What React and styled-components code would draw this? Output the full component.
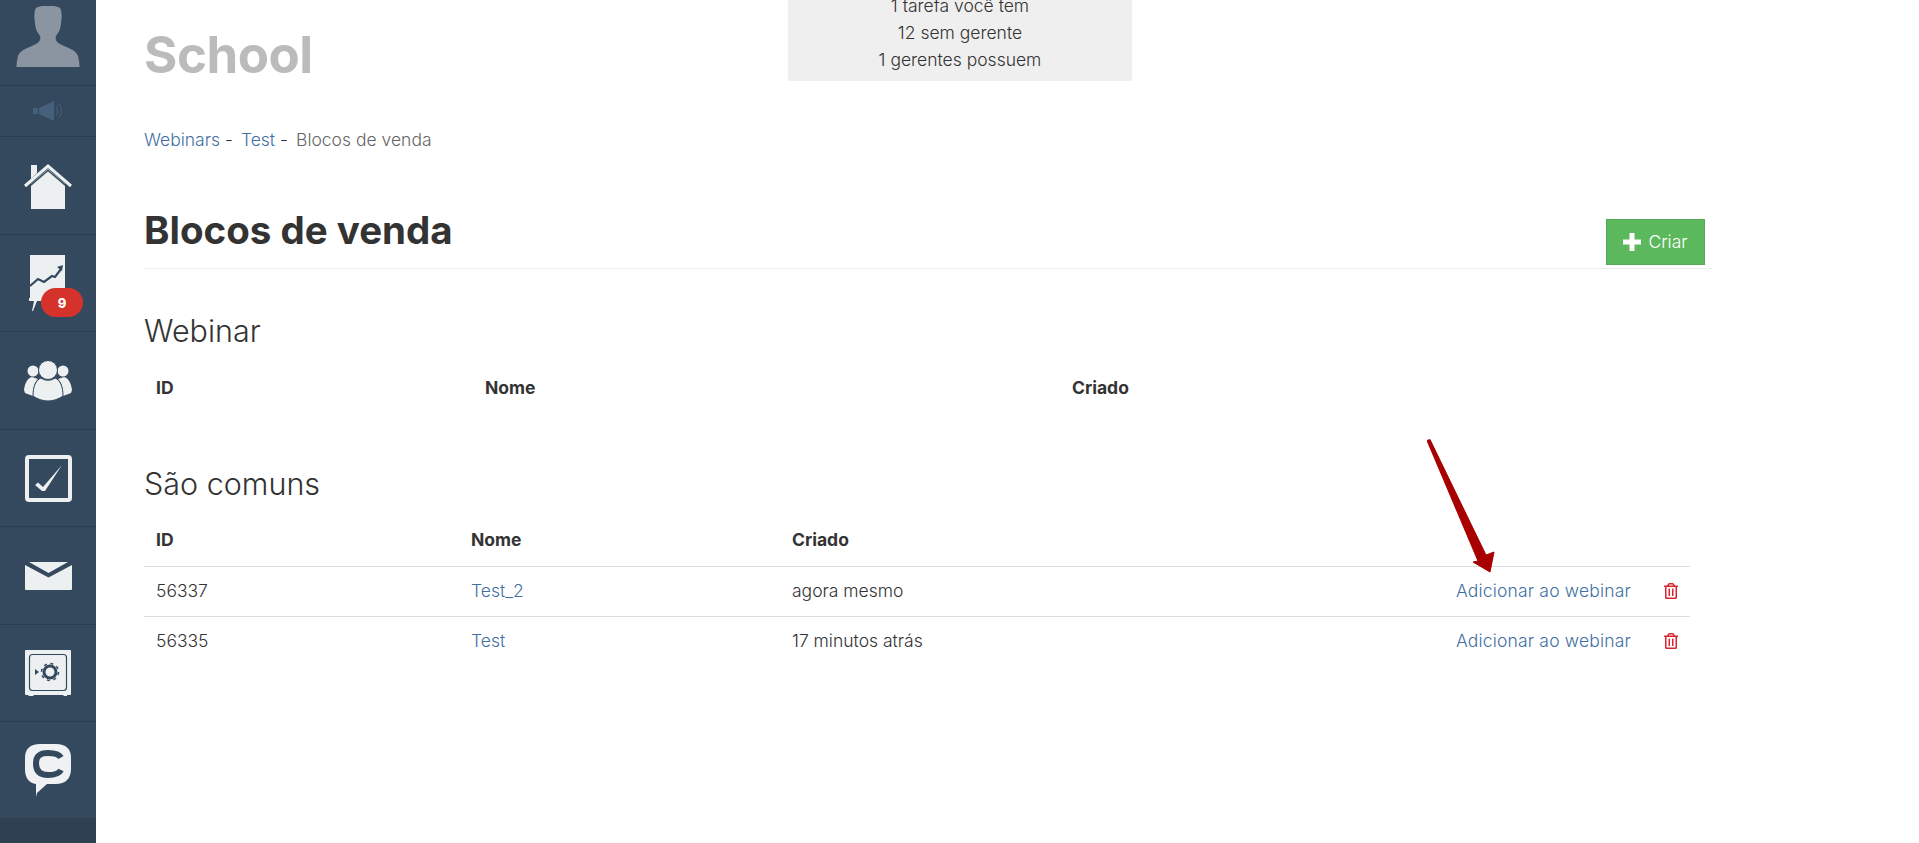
import styled, { createGlobalStyle } from "styled-components";
import { FaRegTrashAlt } from "react-icons/fa";

const GlobalStyle = createGlobalStyle`
    html, body {
        margin: 0;
        padding: 0;
        background: #fff;
        overflow: hidden;
    }
    body {
        font-family: "Inter", "Liberation Sans", sans-serif;
        color: #333;
    }
    * {
        box-sizing: border-box;
    }
`;

const latestRows = [
    { id: "56337", name: "Test_2", created: "agora mesmo" },
    { id: "56335", name: "Test", created: "17 minutos atrás" },
];

const App = () => {
    return (
        <>
            <GlobalStyle />
            <Page>
                <Sidebar>
                    <NavItem $height={86} $bottom={12}>
                        <svg width="64" height="62" viewBox="0 0 64 62">
                            <path
                                fill="#8b95a1"
                                d="M20 2C24 -1 40 -1 44 2C46 5 46 12 45 17C45 22 43 26 40 30C39 33 40 36 44 38C52 42 60 44 62 50C63 54 63.5 58 63.5 61H.5C.5 58 1 54 2 50C4 44 12 42 20 38C24 36 25 33 24 30C21 26 19 22 19 17C18 12 18 5 20 2Z"
                            />
                        </svg>
                    </NavItem>
                    <NavItem $height={51}>
                        <svg width="30" height="20" viewBox="0 0 30 20">
                            <path fill="#465f7b" d="M0 7h5v6H0zM6 7l15-7v20L6 13z" />
                            <path fill="none" stroke="#465f7b" strokeWidth="1" d="M23 5c2 3 2 7 0 10M26 3c3 4 3 10 0 14" />
                        </svg>
                    </NavItem>
                    <NavItem $height={98}>
                        <svg width="48" height="46" viewBox="0 0 48 46">
                            <path fill="#ecf0f1" d="M7 2h6v8l-6 6zM7 21L24 6l17 15v25H7z" />
                            <path fill="none" stroke="#ecf0f1" strokeWidth="3" d="M1 23L24 3l23 20" />
                            <path fill="none" stroke="#34495e" strokeWidth="1.4" d="M3 25.5L24 7.5l21 18" />
                        </svg>
                    </NavItem>
                    <NavItem $height={97}>
                        <svg width="38" height="57" viewBox="0 0 38 57">
                            <path fill="#ecf0f1" d="M1 0h35v44H1z" />
                            <path fill="none" stroke="#34495e" strokeWidth="2.2" d="M1 31l8-7 6 3 8-6 3 1 6-8" />
                            <path fill="#34495e" d="M28 12l6-2-1 6z" />
                            <path fill="#ecf0f1" d="M0 43h20v3H0zM5 46h3l-4 10H3z" />
                        </svg>
                        <Badge>9</Badge>
                    </NavItem>
                    <NavItem $height={98}>
                        <svg width="48" height="41" viewBox="0 0 48 41">
                            <circle cx="9" cy="11" r="5.5" fill="#ecf0f1" />
                            <circle cx="39" cy="11" r="5.5" fill="#ecf0f1" />
                            <path fill="#ecf0f1" d="M8 17c-4 1-7 5-8 13l1 3 8 3c0-7 1-13 5-17zM40 17c4 1 7 5 8 13l-1 3-8 3c0-7-1-13-5-17z" />
                            <circle cx="24" cy="10" r="9.5" fill="#ecf0f1" stroke="#34495e" strokeWidth="1" />
                            <path fill="#ecf0f1" stroke="#34495e" strokeWidth="1" d="M17 18c-5 2-8 8-8 18 4 3 10 5 15 5s11-2 15-5c0-10-3-16-8-18-4 3-10 3-14 0z" />
                        </svg>
                    </NavItem>
                    <NavItem $height={97}>
                        <svg width="47" height="47" viewBox="0 0 47 47">
                            <rect x="2" y="2" width="43" height="43" rx="2" fill="none" stroke="#ecf0f1" strokeWidth="4" />
                            <path fill="#ecf0f1" d="M10 30l3-2.500 5 4.500L37 10 20 36h-3z" />
                        </svg>
                    </NavItem>
                    <NavItem $height={98}>
                        <svg width="47" height="28" viewBox="0 0 47 28">
                            <path fill="#ecf0f1" d="M0 3l23.5 12.500L47 3v24a1 1 0 0 1-1 1H1a1 1 0 0 1-1-1z" />
                            <path fill="#ecf0f1" d="M4 0h39L23.5 11z" />
                        </svg>
                    </NavItem>
                    <NavItem $height={97}>
                        <svg width="46" height="46" viewBox="0 0 46 46">
                            <path fill="#ecf0f1" d="M1 0h44a1 1 0 0 1 1 1v43a1 1 0 0 1-1 1h-3v1h-3l-1-1H9l-1 1H4l-1-1H1a1 1 0 0 1-1-1V1a1 1 0 0 1 1-1z" />
                            <rect x="4.5" y="4.500" width="37" height="36" rx="3" fill="#ecf0f1" stroke="#34495e" strokeWidth="1.2" />
                            <path fill="#34495e" d="M10 19l4 3-4 3z" />
                            <circle cx="25" cy="22" r="6" fill="none" stroke="#34495e" strokeWidth="3" />
                            <circle cx="25" cy="22" r="8.500" fill="none" stroke="#34495e" strokeWidth="1.500" strokeDasharray="3 3.700" />
                        </svg>
                    </NavItem>
                    <NavItem $height={96} $last>
                        <svg width="46" height="53" viewBox="0 0 46 53">
                            <path fill="#f0f1f2" d="M15 0h16c10 0 15 5 15 14v11c0 10-6 15-15 15H22l-10 9-1 4V40C4 39 0 34 0 25V14C0 5 5 0 15 0z" />
                            <path fill="none" stroke="#34495e" strokeWidth="6" d="M36 26c-2 4-7 5-13 5-7 0-12-3-12-11.500S16 9 23 9c6 0 11 1 13 4.500" />
                        </svg>
                    </NavItem>
                    <SidebarRest />
                </Sidebar>
                <Main>
                    <TopBar>
                        <SchoolName>School</SchoolName>
                        <InfoBox>
                            <div>1 tarefa você tem</div>
                            <div>12 sem gerente</div>
                            <div>1 gerentes possuem</div>
                        </InfoBox>
                    </TopBar>
                    <Breadcrumb>
                        <a>Webinars</a>
                        <span className="sep">-</span>
                        <a>Test</a>
                        <span className="sep">-</span>
                        <span className="current">Blocos de venda</span>
                    </Breadcrumb>
                    <TitleRow>
                        <PageTitle>Blocos de venda</PageTitle>
                        <CreateButton>
                            <svg width="18" height="18" viewBox="0 0 18 18">
                                <path fill="#fff" d="M6.500 0h5v6.500H18v5h-6.500V18h-5v-6.500H0v-5h6.500z" />
                            </svg>
                            Criar
                        </CreateButton>
                    </TitleRow>

                    <SectionTitle $top={44}>Webinar</SectionTitle>
                    <TableRow $columns="329px 587px 1fr" $head $plain>
                        <div>ID</div>
                        <div>Nome</div>
                        <div>Criado</div>
                    </TableRow>

                    <SectionTitle $top={52}>São comuns</SectionTitle>
                    <Table>
                        <TableRow $columns="315px 321px 1fr auto" $head>
                            <div>ID</div>
                            <div>Nome</div>
                            <div>Criado</div>
                            <div />
                        </TableRow>
                        {latestRows.map((row) => (
                            <TableRow key={row.id} $columns="315px 321px 1fr auto">
                                <div>{row.id}</div>
                                <div>
                                    <a>{row.name}</a>
                                </div>
                                <div>{row.created}</div>
                                <Actions>
                                    <a>Adicionar ao webinar</a>
                                    <TrashIcon />
                                </Actions>
                            </TableRow>
                        ))}
                    </Table>

                    <Arrow width="72" height="142" viewBox="0 0 72 142">
                        <path
                            fill="#a80000"
                            stroke="#a80000"
                            strokeWidth="1"
                            strokeLinejoin="round"
                            d="M0 1.500L3 .5L59 116L67 113L63 133L46 123L51 122Z"
                        />
                    </Arrow>
                </Main>
            </Page>
        </>
    );
};

export default App;

const Page = styled.div`
    display: flex;
    width: 100%;
    height: 843px;
    overflow: hidden;
`;

const Sidebar = styled.nav`
    width: 96px;
    flex: none;
    display: flex;
    flex-direction: column;
    background-color: #34495e;
`;

const NavItem = styled.div`
    position: relative;
    height: ${(props) => props.$height}px;
    flex: none;
    display: flex;
    justify-content: center;
    align-items: center;
    padding-bottom: ${(props) => props.$bottom || 0}px;
    border-bottom: ${(props) => (props.$last ? "none" : "1px solid #2b3d50")};
`;

const SidebarRest = styled.div`
    flex: 1;
    background-color: #2f4053;
`;

const Badge = styled.span`
    position: absolute;
    left: 41px;
    top: 53px;
    width: 42px;
    height: 29px;
    border-radius: 15px;
    background-color: #d6322c;
    color: #fff;
    font-size: 13px;
    font-weight: 800;
    display: flex;
    justify-content: center;
    align-items: center;
`;

const Main = styled.main`
    position: relative;
    width: 1616px;
    padding-left: 48px;
`;

const TopBar = styled.header`
    display: grid;
    grid-template-columns: 644px 344px;
    height: 81px;
`;

const SchoolName = styled.div`
    font-size: 51px;
    font-weight: 700;
    letter-spacing: -0.5px;
    color: #bbb;
    line-height: 60px;
    padding-top: 25px;
`;

const InfoBox = styled.div`
    height: 81px;
    background-color: #efefef;
    display: flex;
    flex-direction: column;
    justify-content: flex-end;
    overflow: hidden;
    padding-bottom: 8px;
    text-align: center;
    font-size: 17.5px;
    font-weight: 300;
    line-height: 27px;
    color: #333;
`;

const Breadcrumb = styled.div`
    display: flex;
    margin-top: 48px;
    font-size: 17.5px;
    font-weight: 300;
    line-height: 22px;
    color: #333;

    a {
        color: #3f6fa3;
    }

    .sep {
        margin: 0 8px 0 5px;
    }

    .current {
        color: #666;
    }
`;

const TitleRow = styled.div`
    display: flex;
    justify-content: space-between;
    align-items: flex-end;
    height: 118px;
    padding: 0 7px 3px 0;
    border-bottom: 1px solid #eee;
`;

const PageTitle = styled.h1`
    margin: 0 0 13px;
    font-size: 38.5px;
    line-height: 44px;
    font-weight: 700;
    color: #333;
`;

const CreateButton = styled.button`
    width: 99px;
    height: 46px;
    display: flex;
    justify-content: center;
    align-items: center;
    gap: 7px;
    background-color: #5cb85c;
    border: 1px solid #57a957;
    color: #fff;
    font-family: inherit;
    font-size: 17.5px;
    font-weight: 300;
    padding: 0 0 1px;
`;

const SectionTitle = styled.h3`
    margin: ${(props) => props.$top}px 0 12px;
    font-size: 30.5px;
    line-height: 36px;
    font-weight: 300;
    color: #333;
`;

const Table = styled.div`
    width: 1546px;
`;

const TableRow = styled.div`
    display: grid;
    grid-template-columns: ${(props) => props.$columns};
    align-items: center;
    height: ${(props) => (props.$head ? 53 : 50)}px;
    padding: 0 12px ${(props) => (props.$head ? 1 : 2)}px;
    font-size: 17.5px;
    font-weight: ${(props) => (props.$head ? 700 : 300)};
    color: #333;
    border-bottom: ${(props) => (props.$plain ? "none" : "1px solid #ddd")};

    &:last-child {
        border-bottom: none;
        padding-bottom: 3px;
    }

    a {
        color: #3f6fa3;
    }
`;

const Actions = styled.div`
    display: flex;
    align-items: center;
    gap: 33px;

    a {
        letter-spacing: 0.18px;
    }
`;

const TrashIcon = styled(FaRegTrashAlt)`
    width: 14px;
    height: 16px;
    color: #d9232e;
`;

const Arrow = styled.svg`
    position: absolute;
    left: 1331px;
    top: 439px;
`;
